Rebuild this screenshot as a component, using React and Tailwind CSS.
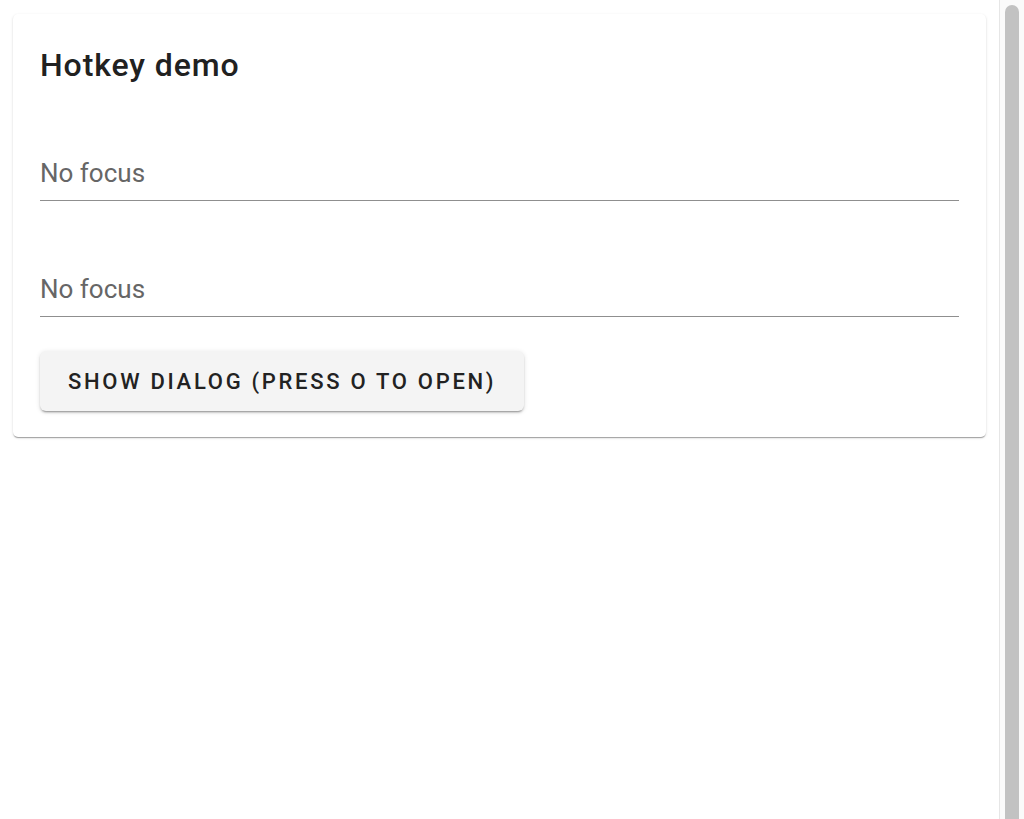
import React from 'react';

const Field = ({ label, className }) => (
  <div className={`border-b border-[#8f8f8f] pb-[12px] ${className}`}>
    <div className="text-[26px] leading-[30px] text-[#666666]">{label}</div>
  </div>
);

export default function App() {
  return (
    <div className="flex h-[819px] w-[1024px] overflow-hidden bg-white font-['Roboto','Liberation_Sans',sans-serif]">
      {/* Page */}
      <div className="flex-1">
        <div className="mx-[13px] mt-[14px] rounded-[5px] bg-white px-[27px] pt-[30px] pb-[26px] shadow-[0_2px_1px_-1px_rgba(0,0,0,0.2),0_1px_1px_0_rgba(0,0,0,0.14),0_1px_3px_0_rgba(0,0,0,0.12)]">
          <h1 className="text-[32px] leading-[43px] font-medium tracking-[0.9px] text-[#212121]">Hotkey demo</h1>
          <Field label="No focus" className="mt-[71px]" />
          <Field label="No focus" className="mt-[73px]" />
          <button className="mt-[34px] flex h-[60px] items-center rounded-[6px] bg-[#f4f4f4] px-[28px] text-[22px] font-medium tracking-[2.7px] text-[#222222] shadow-[0_3px_1px_-2px_rgba(0,0,0,0.2),0_2px_2px_0_rgba(0,0,0,0.14),0_1px_5px_0_rgba(0,0,0,0.12)]">
            SHOW DIALOG (PRESS O TO OPEN)
          </button>
        </div>
      </div>

      {/* Scrollbar */}
      <div className="flex w-[25px] border-l border-[#e6e6e6] bg-[#fafafa] pt-[5px] pl-[5px] pr-[5px]">
        <div className="h-[830px] w-[14px] rounded-full bg-[#c2c2c2]" />
      </div>
    </div>
  );
}
